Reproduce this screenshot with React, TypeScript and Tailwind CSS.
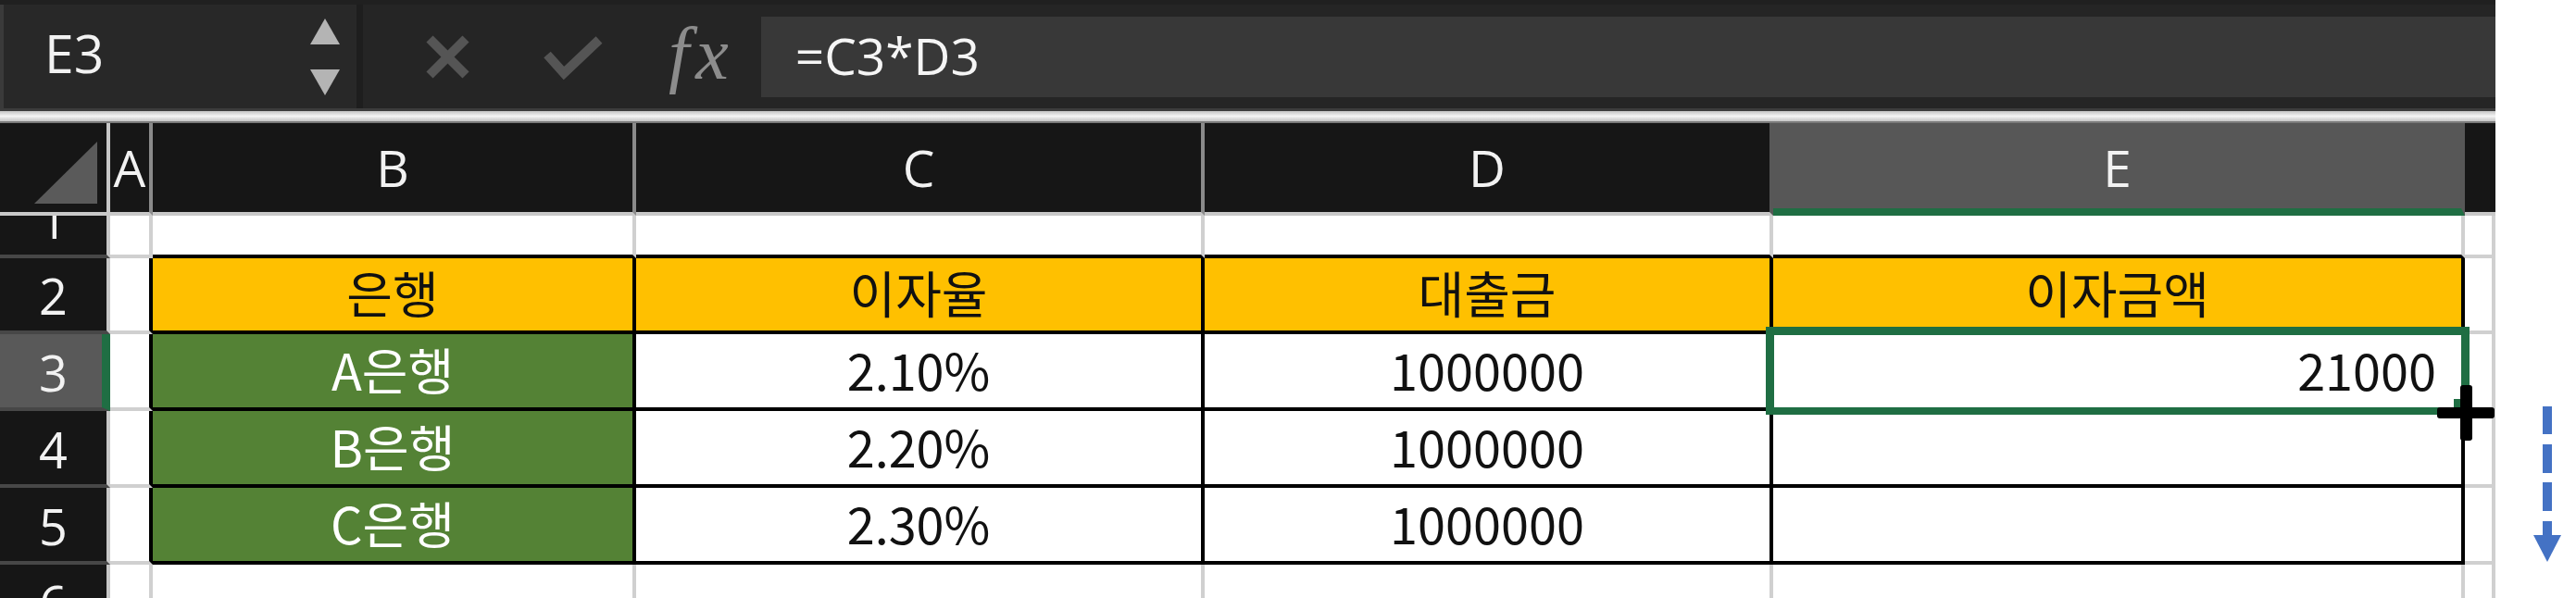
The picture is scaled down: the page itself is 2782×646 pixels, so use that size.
import React from "react";

type Row = { n: string; cells: string[] };

const rows: Row[] = [
  { n: "1", cells: ["", "", "", "", "", ""] },
  { n: "2", cells: ["", "은행", "이자율", "대출금", "이자금액", ""] },
  { n: "3", cells: ["", "A은행", "2.10%", "1000000", "21000", ""] },
  { n: "4", cells: ["", "B은행", "2.20%", "1000000", "", ""] },
  { n: "5", cells: ["", "C은행", "2.30%", "1000000", "", ""] },
  { n: "6", cells: ["", "", "", "", "", ""] },
];

function Toolbar() {
  return (
    <div className="h-[117px] bg-[#252525] flex font-['Open_Sans',sans-serif] text-[#f2f2f2] border-t-[5px] border-t-[#202020]">
      <div className="w-[385px] bg-[#282828] border-l-4 border-l-[#3a3a3a] flex items-center pl-[44px] pr-[18px]">
        <span className="text-[57px] leading-[1.3] pb-[8px]">E3</span>
        <svg className="ml-auto" width="32" height="83" viewBox="0 0 32 83">
          <polygon points="16,0 32,28 0,28" fill="#b4b4b4" />
          <polygon points="0,55 32,55 16,83" fill="#b4b4b4" />
        </svg>
      </div>
      <div className="w-[7px] bg-[#1e1e1e]" />
      <div className="flex items-start">
        <svg className="ml-[68px] mt-[33px]" width="47" height="47" viewBox="0 0 47 47">
          <line x1="4" y1="4" x2="43" y2="43" stroke="#555555" strokeWidth="10" />
          <line x1="43" y1="4" x2="4" y2="43" stroke="#555555" strokeWidth="10" />
        </svg>
        <svg className="ml-[80px] mt-[33px]" width="64" height="49" viewBox="0 0 64 49">
          <polyline points="4,21 22,41 60,5" fill="none" stroke="#555555" strokeWidth="10" />
        </svg>
        <span className="ml-[71px] mt-[13px] font-['Liberation_Serif',serif] italic text-[80px] leading-none text-[#8c8c8c] tracking-[7px]">
          fx
        </span>
      </div>
      <div className="flex-1 ml-[28px] mt-[13px] h-[87px] bg-[#383838] flex items-center pl-[37px]">
        <span className="text-[55px] leading-[1.3] pb-[4px] text-[#f5f5f5]">=C3*D3</span>
      </div>
    </div>
  );
}

function HeaderRow() {
  const base =
    "flex items-center justify-center bg-[#161616] text-[#f2f2f2] text-[55px] leading-[1.3] border-b-4 border-b-[#c8c8c8]";
  return (
    <>
      <div className="flex items-end justify-end bg-[#161616] border-r-4 border-r-[#c8c8c8] border-b-4 border-b-[#c8c8c8] pr-[10px] pb-[9px]">
        <svg width="68" height="67" viewBox="0 0 68 67">
          <polygon points="0,67 68,0 68,67" fill="#5a5a5a" />
        </svg>
      </div>
      <div className={base + " border-r-4 border-r-[#8a8a8a]"}>A</div>
      <div className={base + " border-r-4 border-r-[#8a8a8a]"}>B</div>
      <div className={base + " border-r-4 border-r-[#8a8a8a]"}>C</div>
      <div className={base + " border-r-4 border-r-[#575757]"}>D</div>
      <div className="flex items-center justify-center bg-[#575757] text-[#f2f2f2] text-[55px] leading-[1.3] border-b-[8px] border-b-[#1f6e43] pt-[4px] border-r-4 border-r-[#575757]">
        E
      </div>
      <div className={base} />
    </>
  );
}

function RowHeader({ n }: { n: string }) {
  const sel = n === "3";
  return (
    <div
      className={
        "flex items-end justify-center overflow-hidden pb-[11px] text-[54px] leading-none text-[#f2f2f2] border-b-4 border-b-[#474747] " +
        (sel
          ? "bg-[#595959] border-r-[9px] border-r-[#1f6e43] pl-[5px]"
          : "bg-[#161616] border-r-4 border-r-[#c8c8c8]")
      }
    >
      {n}
    </div>
  );
}

function DataCell({ r, c, text }: { r: number; c: number; text: string }) {
  const inTable = r >= 2 && r <= 5;
  const rightBlack = inTable && c <= 4;
  const bottomBlack = r >= 1 && r <= 5 && c >= 1 && c <= 4;
  const orange = r === 2 && c >= 1 && c <= 4;
  const green = r >= 3 && r <= 5 && c === 1;
  const rightAlign = r === 3 && c === 4;
  const cls = [
    "flex items-center font-['Noto_Sans_CJK_KR',sans-serif] text-[54px] leading-[1.3] pb-[3px] border-r-4 border-b-4",
    rightBlack ? "border-r-black" : "border-r-[#d0d0d0]",
    bottomBlack ? "border-b-black" : "border-b-[#d0d0d0]",
    orange ? "bg-[#ffc000]" : green ? "bg-[#548235]" : "bg-white",
    green ? "text-white" : "text-[#111111]",
    rightAlign ? "justify-end pr-[27px]" : "justify-center",
  ].join(" ");
  return <div className={cls}>{text}</div>;
}

function Grid() {
  return (
    <div className="relative grid grid-cols-[119px_46px_522px_614px_614px_747px_33px] grid-rows-[100px_46px_82px_83px_83px_83px_83px] h-[513px] overflow-hidden font-['Open_Sans',sans-serif]">
      <HeaderRow />
      {rows.map((row, ri) => (
        <React.Fragment key={row.n}>
          <RowHeader n={row.n} />
          {row.cells.map((t, ci) => (
            <DataCell key={ci} r={ri + 1} c={ci} text={t} />
          ))}
        </React.Fragment>
      ))}
      {/* selection */}
      <div className="absolute left-[1907px] top-[220px] w-[760px] h-[95px] border-[9px] border-b-[8px] border-[#1f6e43]" />
      {/* fill handle */}
      <div className="absolute left-[2650px] top-[298px] w-[18px] h-[18px] bg-[#1f6e43]" />
      <div className="absolute left-[2632px] top-[307px] w-[62px] h-[12px] rounded-[3px] bg-black" />
      <div className="absolute left-[2657px] top-[283px] w-[13px] h-[60px] rounded-[3px] bg-black" />
    </div>
  );
}

export default function App() {
  return (
    <div className="relative w-[2782px] h-[646px] overflow-hidden bg-white flex">
      <div className="w-[2695px] flex flex-col">
        <Toolbar />
        <div className="h-[16px] border-t-[3px] border-t-[#3c3c3c] border-b-[2px] border-b-[#7a7a7a] bg-linear-to-b from-[#c4c4c4] via-[#f4f4f4] to-[#c4c4c4]" />
        <Grid />
      </div>
      <svg className="absolute left-[2736px] top-[439px]" width="30" height="168" viewBox="0 0 30 168">
        <rect x="10" y="0" width="10" height="30" fill="#4472c4" />
        <rect x="10" y="41" width="10" height="31" fill="#4472c4" />
        <rect x="10" y="82" width="10" height="31" fill="#4472c4" />
        <rect x="10" y="124" width="10" height="16" fill="#4472c4" />
        <polygon points="0,139 30,139 15,168" fill="#4472c4" />
      </svg>
    </div>
  );
}
